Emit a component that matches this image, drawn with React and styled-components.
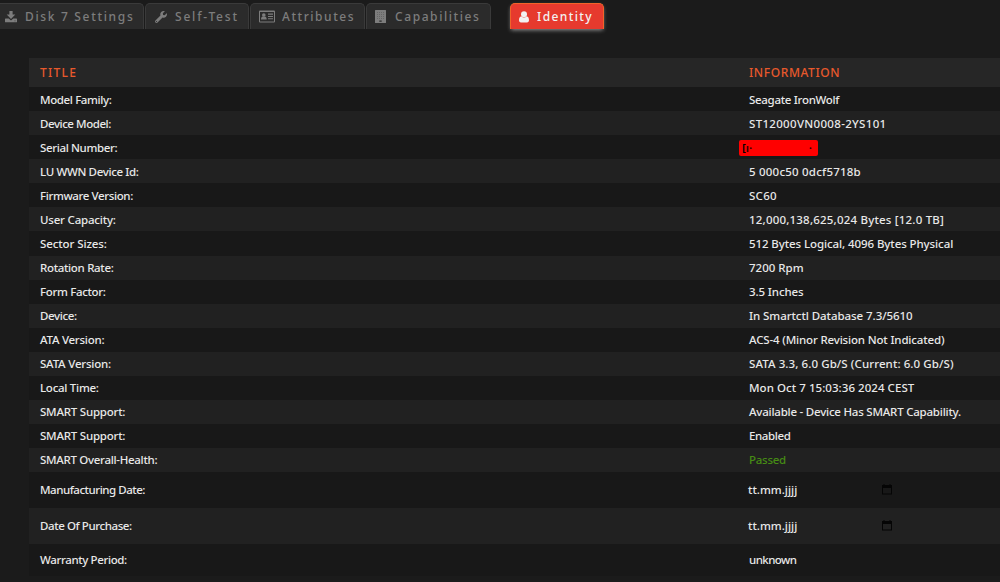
import styled, { createGlobalStyle } from "styled-components"
import { FaWrench } from "react-icons/fa"

// track / infoTrack: letter spacing in px
const rows = [
  { title: "Model Family:", track: -0.38, info: "Seagate IronWolf", infoTrack: -0.3 },
  { title: "Device Model:", track: -0.45, info: "ST12000VN0008-2YS101", infoTrack: 0.32 },
  { title: "Serial Number:", track: -0.36, redacted: true },
  { title: "LU WWN Device Id:", track: -0.35, info: "5 000c50 0dcf5718b", infoTrack: 0.22 },
  { title: "Firmware Version:", track: -0.38, info: "SC60", infoTrack: 0.25 },
  { title: "User Capacity:", track: -0.2, info: "12,000,138,625,024 Bytes [12.0 TB]", infoTrack: 0.2 },
  { title: "Sector Sizes:", track: -0.1, info: "512 Bytes Logical, 4096 Bytes Physical", infoTrack: -0.09 },
  { title: "Rotation Rate:", track: -0.32, info: "7200 Rpm", infoTrack: 0 },
  { title: "Form Factor:", track: -0.33, info: "3.5 Inches", infoTrack: -0.1 },
  { title: "Device:", track: -0.35, info: "In Smartctl Database 7.3/5610", infoTrack: -0.06 },
  { title: "ATA Version:", track: -0.25, info: "ACS-4 (Minor Revision Not Indicated)", infoTrack: -0.16 },
  { title: "SATA Version:", track: -0.2, info: "SATA 3.3, 6.0 Gb/S (Current: 6.0 Gb/S)", infoTrack: 0.09 },
  { title: "Local Time:", track: -0.27, info: "Mon Oct 7 15:03:36 2024 CEST", infoTrack: 0.05 },
  { title: "SMART Support:", track: -0.22, info: "Available - Device Has SMART Capability.", infoTrack: -0.22 },
  { title: "SMART Support:", track: -0.22, info: "Enabled", infoTrack: -0.38 },
  { title: "SMART Overall-Health:", track: -0.3, info: "Passed", infoTrack: -0.25, passed: true },
  { title: "Manufacturing Date:", track: -0.47, date: true, height: 36 },
  { title: "Date Of Purchase:", track: -0.41, date: true, height: 36 },
  { title: "Warranty Period:", track: -0.37, info: "unknown", infoTrack: -0.55, height: 32 },
]

const DownloadIcon = () => (
  <svg width="12" height="12" viewBox="0 0 12 12" fill="currentColor">
    <path d="M4.4 0h3.2v3.6h2.7L6 7.9 1.7 3.6h2.7z" />
    <path
      fillRule="evenodd"
      d="M.6 7.4h3.1L6 9.6l2.3-2.2h3.1a.6.6 0 0 1 .6.6v2.7a.6.6 0 0 1-.6.6H.6a.6.6 0 0 1-.6-.6V8a.6.6 0 0 1 .6-.6zM9.6 9.4v.8h.8v-.8z"
    />
  </svg>
)

const CardIcon = () => (
  <svg width="16" height="13" viewBox="0 0 16 13" fill="currentColor">
    <path fillRule="evenodd" d="M1 0.5h14a1 1 0 0 1 1 1v10a1 1 0 0 1-1 1H1a1 1 0 0 1-1-1v-10a1 1 0 0 1 1-1zM1 2v9.5h14V2z" />
    <circle cx="4.8" cy="5" r="1.8" />
    <path d="M2 9.6c0-2 .8-3 1.7-3h2.2c.9 0 1.8 1 1.8 3z" />
    <path d="M9 3.6h5v1.1H9zM9 5.9h5V7H9zM9 8.2h5v1.1H9z" />
  </svg>
)

const BuildingIcon = () => (
  <svg width="11" height="13" viewBox="0 0 11 13" fill="currentColor">
    <path
      fillRule="evenodd"
      d="M.5 0h10a.5.5 0 0 1 .5.5v12a.5.5 0 0 1-.5.5H.5a.5.5 0 0 1-.5-.5V.5A.5.5 0 0 1 .5 0zM4.3 10.6v1.2h2.4v-1.2z"
    />
    <path d="M2 2.5h7M2 4.5h7M2 6.5h7M2 8.5h7" stroke="#5c5c5c" strokeWidth=".7" strokeDasharray="1 1" />
  </svg>
)

const UserIcon = () => (
  <svg width="10" height="12" viewBox="0 0 10 12" fill="currentColor">
    <circle cx="5" cy="3.3" r="3" />
    <path d="M2.4 5.3C3.9 6.9 6.1 6.9 7.6 5.3 9.3 5.6 10 7.2 10 9.3c0 1.3-.8 2.1-2 2.1H2c-1.2 0-2-.8-2-2.1 0-2.1.7-3.7 2.4-4z" />
  </svg>
)

const CalendarIcon = () => (
  <svg width="10" height="11" viewBox="0 0 10 11">
    <path fill="#050505" fillRule="evenodd" d="M0 1h1.5V0h1v1h5V0h1v1H10v9.5H0zM1 4v5.5h8V4z" />
  </svg>
)

const tabs = [
  { label: "Disk 7 Settings", icon: <DownloadIcon />, width: 148, gap: 8, pad: 8, track: 1.67 },
  { label: "Self-Test", icon: <FaWrench />, width: 104, gap: 8, pad: 9, track: 1.8 },
  { label: "Attributes", icon: <CardIcon />, width: 115, gap: 7, pad: 8, track: 1.55 },
  { label: "Capabilities", icon: <BuildingIcon />, width: 125, gap: 9, pad: 8, track: 1.58 },
  { label: "Identity", icon: <UserIcon />, width: 94, gap: 8, pad: 8, track: 1.4, active: true },
]

export default function App() {
  return (
    <>
      <GlobalStyle />
      <Page>
        <Tabs>
          {tabs.map((tab) => (
            <Tab key={tab.label} $active={tab.active} $width={tab.width} $pad={tab.pad} $gap={tab.gap}>
              {tab.icon}
              <TabLabel $track={tab.track}>{tab.label}</TabLabel>
            </Tab>
          ))}
        </Tabs>
        <Table>
          <HeadRow>
            <HeadText $track={1.25}>TITLE</HeadText>
            <HeadText $track={0.6}>INFORMATION</HeadText>
          </HeadRow>
          {rows.map((row, i) => (
            <Row key={i} $odd={i % 2 === 0} $height={row.height}>
              <Text $track={row.track}>{row.title}</Text>
              {row.redacted && (
                <Redacted>
                  <Bracket>[</Bracket>
                  <span>ı·</span>
                  <Dot>·</Dot>
                </Redacted>
              )}
              {row.date && (
                <DateField>
                  <span>tt.mm.jjjj</span>
                  <CalendarIcon />
                </DateField>
              )}
              {row.info && <Text $track={row.infoTrack} $passed={row.passed}>{row.info}</Text>}
            </Row>
          ))}
        </Table>
      </Page>
    </>
  )
}

const GlobalStyle = createGlobalStyle`
  body {
    margin: 0;
    background: #1b1b1b;
    overflow: hidden;
  }
`

const Page = styled.div`
  height: 582px;
  overflow: hidden;
  box-sizing: border-box;
  padding-top: 3px;
  font-family: "Noto Sans", sans-serif;
  font-size: 11.5px;
  color: #e8e8e8;
`

const Tabs = styled.nav`
  display: flex;
  gap: 1px;
  height: 26px;
  margin-left: -4px;
`

const Tab = styled.div`
  box-sizing: border-box;
  flex: none;
  width: ${(p) => p.$width}px;
  margin-left: ${(p) => (p.$active ? 18 : 0)}px;
  padding-left: ${(p) => p.$pad}px;
  display: flex;
  align-items: center;
  gap: ${(p) => p.$gap}px;
  border: 1px solid ${(p) => (p.$active ? "#f0642a" : "#3a3a3a")};
  border-bottom: none;
  border-radius: 5px 5px 0 0;
  background: ${(p) => (p.$active ? "#e63a2e" : "#2b2b2b")};
  color: ${(p) => (p.$active ? "#f2f2f2" : "#7d7d7d")};
  box-shadow: ${(p) => (p.$active ? "0 2px 4px -1px #999" : "none")};
  font-size: 12px;
  white-space: nowrap;
`

const TabLabel = styled.span`
  font-weight: 500;
  letter-spacing: ${(p) => p.$track}px;
`

const Table = styled.section`
  margin: 29px 0 0 29px;
`

const HeadRow = styled.div`
  display: grid;
  grid-template-columns: 709px 1fr;
  align-items: center;
  height: 29.2px;
  padding-left: 11px;
  background: #262626;
  color: #e8592c;
  font-size: 12px;
`

const HeadText = styled.span`
  font-weight: 500;
  letter-spacing: ${(p) => p.$track}px;
`

const Row = styled.div`
  display: grid;
  grid-template-columns: 709px 1fr;
  align-items: center;
  height: ${(p) => p.$height || 24.05}px;
  padding-left: 11px;
  background: ${(p) => (p.$odd ? "#181818" : "#212121")};
`

const Text = styled.span`
  color: ${(p) => (p.$passed ? "#468c14" : "inherit")};
  font-weight: 500;
  letter-spacing: ${(p) => p.$track}px;
  white-space: nowrap;
`

const Redacted = styled.div`
  box-sizing: border-box;
  width: 79px;
  height: 16px;
  margin: 1px 0 0 -10px;
  padding: 0 6px 0 3px;
  display: flex;
  align-items: center;
  border-radius: 2px;
  background: #ff0000;
  color: #300000;
  font-weight: 600;
  line-height: 16px;
`

const Bracket = styled.span`
  color: #000;
`

const Dot = styled.span`
  margin-left: auto;
`

const DateField = styled.div`
  display: flex;
  align-items: center;
  justify-content: space-between;
  width: 144px;
  margin-left: -1px;
  font-weight: 500;
`
